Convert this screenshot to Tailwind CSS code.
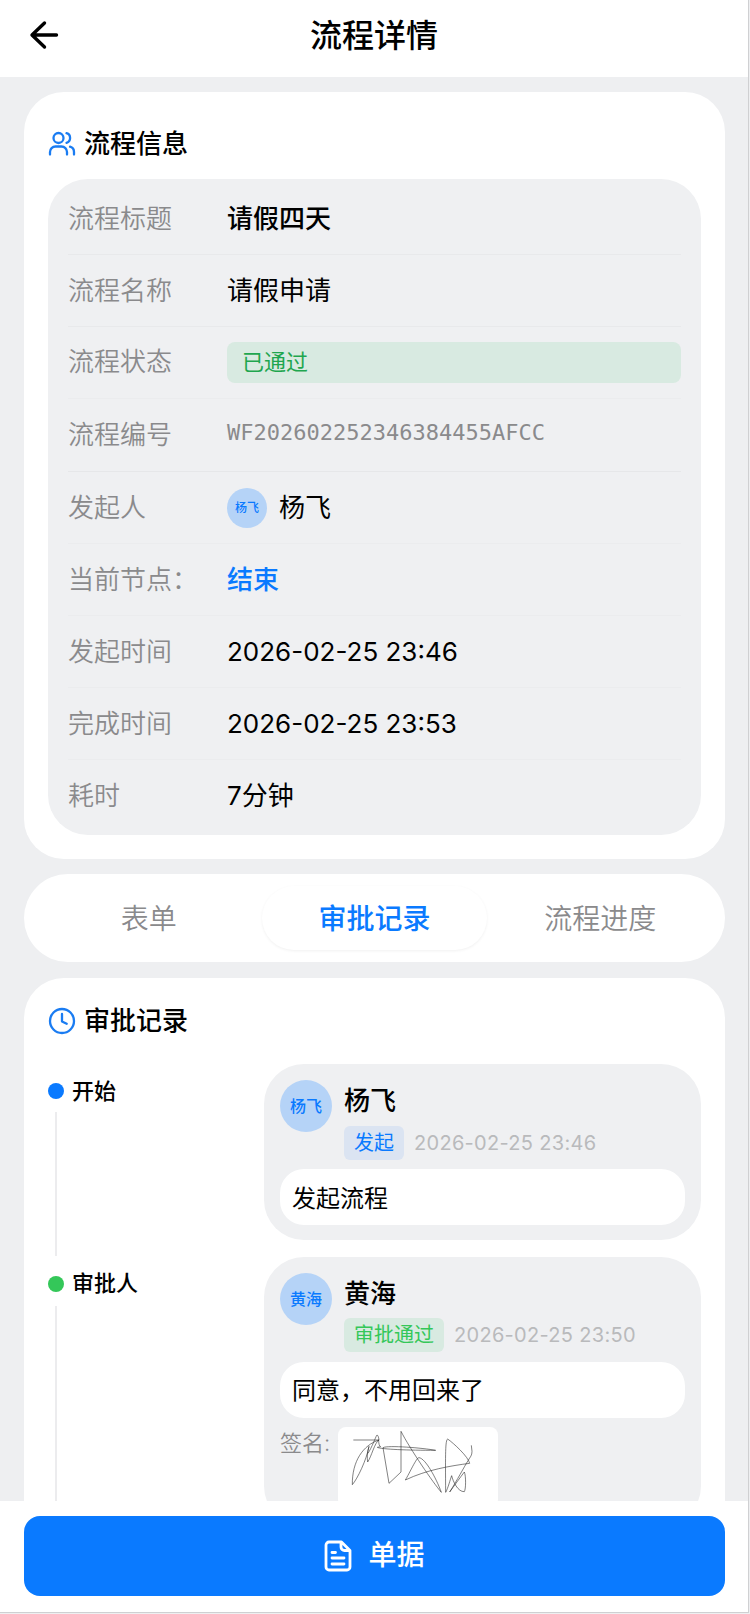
<!DOCTYPE html>
<html lang="zh-CN">
<head>
    <meta charset="UTF-8">
    <meta name="viewport" content="width=device-width, initial-scale=1.0">
    <title>流程详情</title>
    <script src="https://cdn.jsdelivr.net/npm/@tailwindcss/browser@4"></script>
</head>
<body class="bg-[#eeeff1] font-['Inter','Noto_Sans_CJK_SC',sans-serif] text-black">
    <div class="flex flex-col w-[749px] h-[1613px] border-r border-b border-[#cfd0d2] bg-[#eeeff1] overflow-hidden">
        <header class="flex-none grid grid-cols-[100px_1fr_100px] items-center h-[77px] pb-2 bg-white">
            <a href="#" class="pl-[27px]">
                <svg class="size-[34px]" viewBox="0 0 34 34" fill="none" stroke="currentColor" stroke-width="3.4" stroke-linecap="round" stroke-linejoin="round">
                    <path d="M17.500 5 5 17 17.500 29M5.500 17H29.500"/>
                </svg>
            </a>
            <h1 class="text-center text-[32px] leading-[48px] pt-0.5 font-medium">流程详情</h1>
        </header>

        <main class="flex-1 min-h-0 overflow-hidden flex flex-col gap-[15px] px-6 pt-[15px]">
            <section class="flex-none w-[701px] h-[767px] bg-white rounded-[40px] px-6 pt-[32px]">
                <div class="flex items-center gap-[9px] h-10 mb-[15px]">
                    <svg class="size-7 -mr-px text-[#1a7cf2]" viewBox="0 0 28 28" fill="none" stroke="currentColor" stroke-width="2.3" stroke-linecap="round">
                        <circle cx="10.500" cy="8" r="5"/>
                        <path d="M2 24.500v-2.500a5.500 5.500 0 0 1 5.500-5.500h6a5.500 5.500 0 0 1 5.500 5.500v2.500M18.500 3.200a5 5 0 0 1 0 9.600M22 16.700a5.500 5.500 0 0 1 4 5.300v2.500"/>
                    </svg>
                    <h2 class="text-[26px] leading-10 font-medium">流程信息</h2>
                </div>
                <dl class="w-[653px] h-[656px] bg-[#eff0f2] rounded-[40px] px-5 pt-1 text-[26px] leading-9">
                    <div class="flex items-center h-[72px] border-b border-[#e8e9eb]">
                        <dt class="w-[159px] text-[#8a8a8c] font-[350]">流程标题</dt>
                        <dd class="font-medium">请假四天</dd>
                    </div>
                    <div class="flex items-center h-[72px] border-b border-[#e8e9eb]">
                        <dt class="w-[159px] text-[#8a8a8c] font-[350]">流程名称</dt>
                        <dd>请假申请</dd>
                    </div>
                    <div class="flex items-center h-[72px] border-b border-[#ebecee]">
                        <dt class="w-[159px] pb-0.5 text-[#8a8a8c] font-[350]">流程状态</dt>
                        <dd class="flex-1 h-[41px] rounded-lg bg-[#d8eae1] px-[15px] text-[22px] leading-[41px] text-[#1fa64f]">已通过</dd>
                    </div>
                    <div class="flex items-center h-[73px] border-b border-[#e6e7e9]">
                        <dt class="w-[159px] text-[#8a8a8c] font-[350]">流程编号</dt>
                        <dd class="pb-1 font-['DejaVu_Sans_Mono',monospace] text-[22px] text-[#8a8a8c]">WF202602252346384455AFCC</dd>
                    </div>
                    <div class="flex items-center h-[72px] border-b border-[#ebecee]">
                        <dt class="w-[159px] text-[#8a8a8c] font-[350]">发起人</dt>
                        <dd class="flex items-center gap-3">
                            <span class="size-10 rounded-full bg-[#b5d3f7] text-center text-xs leading-10 font-medium text-[#0a7aff]">杨飞</span>
                            杨飞
                        </dd>
                    </div>
                    <div class="flex items-center h-[72px] border-b border-[#ebecee]">
                        <dt class="w-[159px] text-[#8a8a8c] font-[350]">当前节点：</dt>
                        <dd class="font-medium text-[#0a7aff]">结束</dd>
                    </div>
                    <div class="flex items-center h-[72px] border-b border-[#ebecee]">
                        <dt class="w-[159px] text-[#8a8a8c] font-[350]">发起时间</dt>
                        <dd>2026-02-25 23:46</dd>
                    </div>
                    <div class="flex items-center h-[72px] border-b border-[#ebecee]">
                        <dt class="w-[159px] text-[#8a8a8c] font-[350]">完成时间</dt>
                        <dd>2026-02-25 23:53</dd>
                    </div>
                    <div class="flex items-center h-[71px]">
                        <dt class="w-[159px] text-[#8a8a8c] font-[350]">耗时</dt>
                        <dd>7分钟</dd>
                    </div>
                </dl>
            </section>

            <nav class="flex-none flex w-[701px] h-[88px] bg-white rounded-[44px] p-3 text-[28px] leading-[66px] text-center text-[#8a8a8c]">
                <a href="#form" class="flex-1 font-[350]">表单</a>
                <a href="#records" class="flex-1 rounded-full bg-white font-medium text-[#0a7aff] shadow-[0_1px_3px_rgba(0,0,0,0.06)]">审批记录</a>
                <a href="#progress" class="flex-1 font-[350]">流程进度</a>
            </nav>

            <section id="records" class="flex-none w-[701px] bg-white rounded-[40px] px-6 pt-[23px] pb-6 mt-px">
                <div class="flex items-center gap-2 h-10 mb-[23px]">
                    <svg class="size-7 text-[#1a7cf2]" viewBox="0 0 28 28" fill="none" stroke="currentColor" stroke-width="2.3" stroke-linecap="round" stroke-linejoin="round">
                        <circle cx="14" cy="14" r="12"/>
                        <path d="M14 7v7.500l4.700 2.300"/>
                    </svg>
                    <h2 class="text-[26px] leading-10 font-medium">审批记录</h2>
                </div>

                <div class="flex w-[653px] mb-[17px]">
                    <div class="flex flex-col w-[216px]">
                        <div class="flex items-center gap-2 h-12 pt-1.5 text-[22px] font-medium">
                            <span class="size-4 rounded-full bg-[#0a7aff]"></span>开始
                        </div>
                        <div class="flex-1 w-0.5 ml-[7px] -mb-4 bg-[#ececee]"></div>
                    </div>
                    <article class="flex-1 h-[176px] rounded-[40px] bg-[#eff0f2] px-4 pt-4">
                        <div class="flex gap-3 h-[89px]">
                            <span class="size-[52px] rounded-full bg-[#b5d3f7] text-center text-base leading-[52px] font-medium text-[#0a7aff]">杨飞</span>
                            <div>
                                <h3 class="text-[26px] leading-[42px] font-medium">杨飞</h3>
                                <div class="flex items-center gap-[10px] mt-1 text-xl leading-[34px]">
                                    <span class="rounded-md bg-[#dbe4f2] px-[10px] text-[#0a7aff]">发起</span>
                                    <time class="text-[#b9babc] tracking-[0.3px]">2026-02-25 23:46</time>
                                </div>
                            </div>
                        </div>
                        <p class="h-14 rounded-3xl bg-white px-3 text-2xl leading-[60px]">发起流程</p>
                    </article>
                </div>

                <div class="flex w-[653px]">
                    <div class="flex flex-col w-[216px]">
                        <div class="flex items-center gap-2 h-[49px] pt-1 text-[22px] font-medium">
                            <span class="size-4 rounded-full bg-[#34c759]"></span>审批人
                        </div>
                        <div class="flex-1 w-0.5 ml-[7px] bg-[#ececee]"></div>
                    </div>
                    <article class="flex-1 h-[269px] rounded-[40px] bg-[#eff0f2] px-4 pt-4">
                        <div class="flex gap-3 h-[89px]">
                            <span class="size-[52px] rounded-full bg-[#b5d3f7] text-center text-base leading-[52px] font-medium text-[#0a7aff]">黄海</span>
                            <div>
                                <h3 class="text-[26px] leading-[42px] font-medium">黄海</h3>
                                <div class="flex items-center gap-[10px] mt-[3px] text-xl leading-[34px]">
                                    <span class="rounded-md bg-[#d8eae1] px-[10px] text-[#34c759]">审批通过</span>
                                    <time class="text-[#b9babc] tracking-[0.3px]">2026-02-25 23:50</time>
                                </div>
                            </div>
                        </div>
                        <p class="h-14 rounded-3xl bg-white px-3 text-2xl leading-[58px]">同意，不用回来了</p>
                        <div class="flex gap-2 mt-[9px]">
                            <span class="w-[50px] whitespace-nowrap text-[22px] leading-8 text-[#8a8a8c] font-[350]">签名:</span>
                            <div class="w-40 h-20 rounded-lg bg-white">
                                <!-- handwritten signature -->
                                <svg class="w-40 h-20" viewBox="24 22 480 240" fill="none" stroke="#222" stroke-width="1.700" stroke-linejoin="round">
                                    <path d="M70 61H147C100 76 66 124 67 195C82 178 110 120 117 80C111 98 111 116 113 127C124 112 134 68 147 61C146 50 142 44 140 47C136 55 126 82 114 101"/>
                                    <path d="M146 61C146 72 148 80 152 81L142 83C154 89 235 92 317 92C280 85 174 76 159 84L177 191L213 157V35C240 88 310 190 334 218C318 174 286 116 267 114C260 112 238 162 226 181C290 150 365 138 419 131C415 111 370 70 353 58C346 62 346 100 347 218C354 206 361 178 365 168C369 186 384 217 403 216C408 208 408 168 403 157C390 174 372 199 359 217C380 184 404 139 414 123C421 111 426 108 426 95L424 77"/>
                                </svg>
                            </div>
                        </div>
                    </article>
                </div>
            </section>
        </main>

        <footer class="flex-none h-[111px] bg-white px-6 pt-[15px]">
            <button class="flex items-center justify-center gap-[18px] w-[701px] h-20 rounded-2xl bg-[#0a7aff] text-[28px] font-medium text-white">
                <svg class="w-7 h-8 -mr-0.5" viewBox="0 0 28 32" fill="none" stroke="currentColor" stroke-width="2.800" stroke-linecap="round" stroke-linejoin="round">
                    <path d="M17.500 2H5a3 3 0 0 0-3 3v22a3 3 0 0 0 3 3h18a3 3 0 0 0 3-3V10.500zM17 2.500V7a3.500 3.500 0 0 0 3.500 3.500H25M8 12.500h3.500M8 18h12M8 24h12"/>
                </svg>
                <span class="leading-10 -mt-0.5">单据</span>
            </button>
        </footer>
    </div>
</body>
</html>
